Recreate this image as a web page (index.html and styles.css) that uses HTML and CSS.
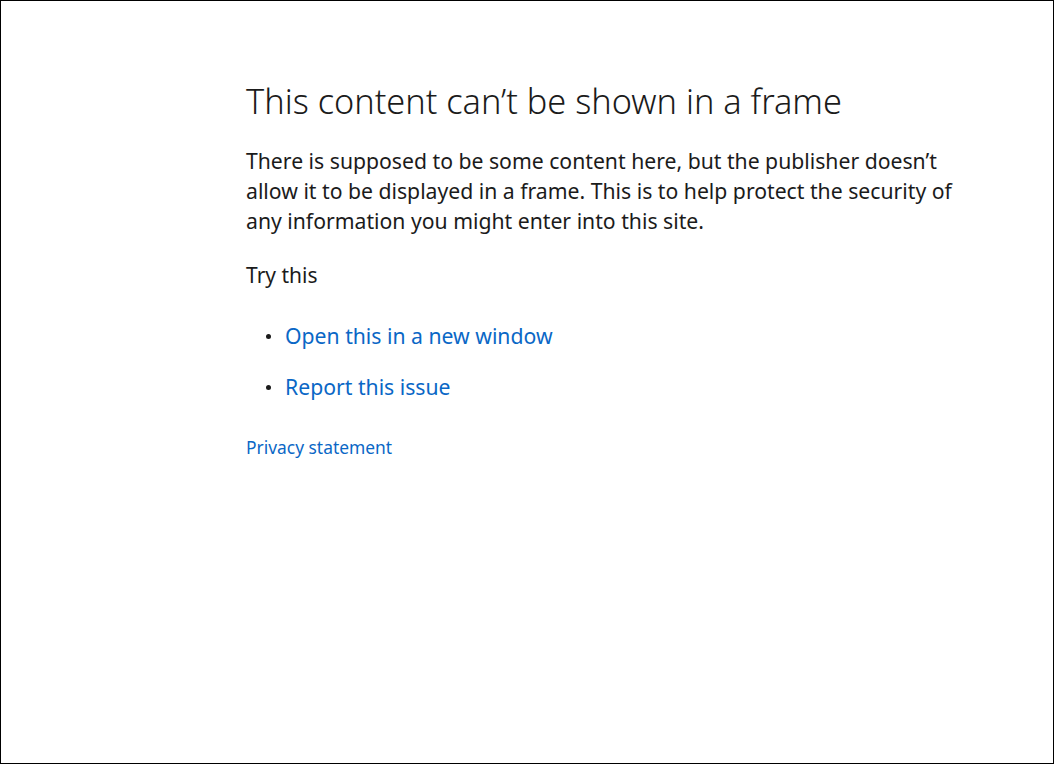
FILE: index.html
```html
<!DOCTYPE html>
<html lang="en">
<head>
<meta charset="utf-8">
<title>This content can't be shown in a frame</title>
<link rel="stylesheet" href="styles.css">
</head>
<body>
<div class="frame">
  <main class="content">
    <h1 class="title">This content can’t be shown in a frame</h1>
    <p class="desc">There is supposed to be some content here, but the publisher doesn’t allow it to be displayed in a frame. This is to help protect the security of any information you might enter into this site.</p>
    <p class="try">Try this</p>
    <ul class="actions">
      <li class="action"><a href="#" class="link">Open this in a new window</a></li>
      <li class="action"><a href="#" class="link">Report this issue</a></li>
    </ul>
    <a href="#" class="privacy">Privacy statement</a>
  </main>
</div>
</body>
</html>
```

FILE: styles.css
```css
html, body {
  margin: 0;
  padding: 0;
  background: #ffffff;
}

.frame {
  box-sizing: border-box;
  width: 1054px;
  height: 764px;
  border: 1px solid #000000;
  font-family: "Noto Sans", "Open Sans", sans-serif;
  color: #1b1b1b;
}

.content {
  margin-left: 245px;
  width: 725px;
  padding-top: 80px;
}

.title {
  margin: 0;
  font-size: 34.3px;
  line-height: 40px;
  font-weight: 300;
}

.desc {
  margin: 25px 0 0;
  font-size: 21.2px;
  line-height: 30px;
}

.try {
  margin: 24px 0 0;
  font-size: 21px;
  line-height: 30px;
}

.actions {
  list-style: none;
  margin: 31px 0 0;
  padding: 0 0 0 20px;
  display: flex;
  flex-direction: column;
  gap: 21px;
}

.action {
  display: flex;
  align-items: center;
  gap: 14px;
  font-size: 21.2px;
  line-height: 30px;
}

.action::before {
  content: "";
  width: 5px;
  height: 5px;
  border-radius: 50%;
  background: #1b1b1b;
  flex: none;
}

.link, .privacy {
  color: #0a67c6;
  text-decoration: none;
}

.privacy {
  display: block;
  margin-top: 33px;
  font-size: 17.4px;
  line-height: 24px;
}
```
